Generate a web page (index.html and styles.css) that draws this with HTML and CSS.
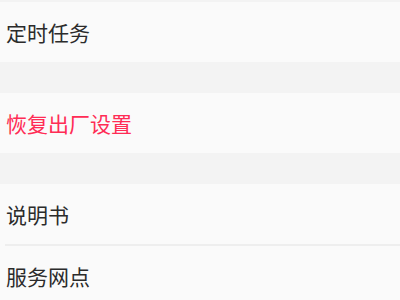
FILE: index.html
```html
<!DOCTYPE html>
<html lang="zh-CN">
<head>
  <meta charset="UTF-8" />
  <title>设置</title>
  <link rel="stylesheet" href="styles.css">
</head>
<body>
  <div class="settings">
    <div class="group">
      <div class="item">定时任务</div>
    </div>
    <div class="group">
      <div class="item danger">恢复出厂设置</div>
    </div>
    <div class="group">
      <div class="item">说明书</div>
      <div class="item">服务网点</div>
    </div>
  </div>
</body>
</html>
```

FILE: styles.css
```css
body {
  margin: 0;
  background: #f3f3f3;
  font-family: "Noto Sans CJK SC", "Noto Sans", sans-serif;
}

.settings {
  display: flex;
  flex-direction: column;
  gap: 31px;
  padding-top: 2px;
}

.group {
  background: #fafafa;
}

.item {
  height: 60px;
  line-height: 60px;
  padding-left: 6px;
  font-size: 21px;
  color: #2b2b2b;
}

.item + .item {
  border-top: 2px solid #eeeeee;
  margin-left: 5px;
  padding-left: 1px;
}

.danger {
  color: #ff2c55;
}
```
